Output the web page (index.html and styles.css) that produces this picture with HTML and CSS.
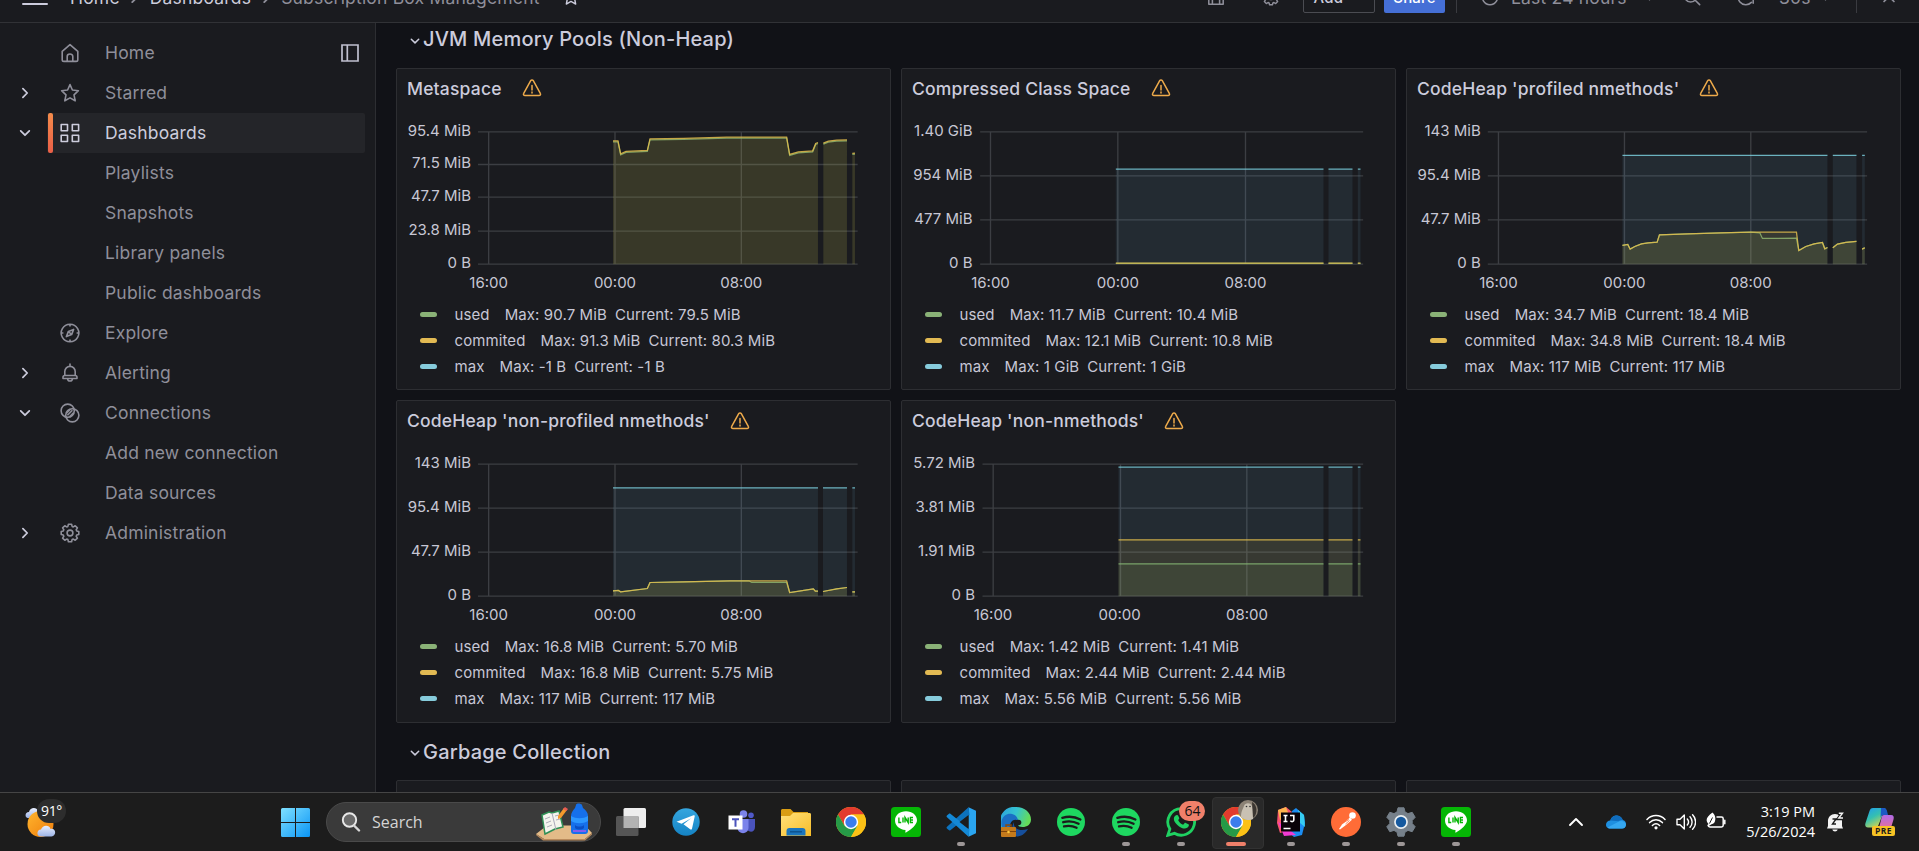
FILE: index.html
```html
<!DOCTYPE html>
<html lang="en">
<head>
<meta charset="utf-8">
<title>Subscription Box Management - Dashboards - Grafana</title>
<link rel="stylesheet" href="styles.css">
</head>
<body>
<svg class="defs" aria-hidden="true">
  <defs>
    <symbol id="i-down" viewBox="0 0 12 12"><path d="M2.3 4.2 6 7.9l3.7-3.7" fill="none" stroke="currentColor" stroke-width="1.5" stroke-linecap="round" stroke-linejoin="round"/></symbol>
    <symbol id="i-right" viewBox="0 0 12 12"><path d="M4.2 2.3 7.9 6 4.2 9.7" fill="none" stroke="currentColor" stroke-width="1.5" stroke-linecap="round" stroke-linejoin="round"/></symbol>
    <symbol id="i-star" viewBox="0 0 20 20"><path d="m10 1.6 2.4 5.4 6 .7-4.4 4.1 1.2 6L10 14.900l-5.200 2.900 1.200-6-4.400-4.100 6-.7z" fill="none" stroke="currentColor" stroke-width="1.6" stroke-linejoin="round"/></symbol>
    <symbol id="i-warn" viewBox="0 0 20 20"><path d="M8.700 2.700 1.700 15.400c-.6 1 0 2.200 1.300 2.200h14c1.300 0 1.900-1.200 1.300-2.200l-7-12.700c-.6-1-2-1-2.600 0zM10 7.600v4.300M10 14v.9" fill="none" stroke="currentColor" stroke-width="1.500" stroke-linecap="round"/></symbol>
    <symbol id="i-cog" viewBox="0 0 20 20"><path d="m8.400 1.300h3.200l.5 2.100 1.200.5 1.900-1.200 2.200 2.200-1.200 1.900.5 1.200 2.100.5v3l-2.100.5-.5 1.200 1.200 1.900-2.200 2.200-1.900-1.200-1.200.5-.5 2.100H8.400l-.5-2.100-1.200-.5-1.900 1.200-2.200-2.200 1.200-1.900-.5-1.200-2.100-.5v-3l2.100-.5.5-1.200-1.200-1.900 2.200-2.200 1.900 1.200 1.200-.5z" fill="none" stroke="currentColor" stroke-width="1.600" stroke-linejoin="round"/><circle cx="10" cy="10" r="2.900" fill="none" stroke="currentColor" stroke-width="1.600"/></symbol>
    <linearGradient id="g-win" x1="0" y1="0" x2="1" y2="1"><stop offset="0" stop-color="#7fe0ff"/><stop offset="1" stop-color="#0a95f5"/></linearGradient>
    <linearGradient id="g-tg" x1="0" y1="0" x2="0" y2="1"><stop offset="0" stop-color="#35a6df"/><stop offset="1" stop-color="#1583c4"/></linearGradient>
    <linearGradient id="g-folder" x1="0" y1="0" x2="1" y2="1"><stop offset="0" stop-color="#ffe07a"/><stop offset="1" stop-color="#f7bd28"/></linearGradient>
    <linearGradient id="g-edge" x1="0" y1="0" x2="1" y2="0.300"><stop offset="0" stop-color="#2b9fe0"/><stop offset=".55" stop-color="#35c4cf"/><stop offset="1" stop-color="#64dc5a"/></linearGradient>
    <linearGradient id="g-cop" x1="0" y1="0" x2=".6" y2="1"><stop offset="0" stop-color="#1f9cf0"/><stop offset=".5" stop-color="#35c0b0"/><stop offset="1" stop-color="#d9d74a"/></linearGradient>
    <linearGradient id="g-cop2" x1="0" y1="0" x2="0" y2="1"><stop offset="0" stop-color="#b06be8"/><stop offset="1" stop-color="#f0708c"/></linearGradient>
    <linearGradient id="g-cloud" x1="0" y1="0" x2="0" y2="1"><stop offset="0" stop-color="#e8efff"/><stop offset="1" stop-color="#9db4e6"/></linearGradient>
    <linearGradient id="g-sun" x1="0" y1="0" x2="1" y2="1"><stop offset="0" stop-color="#ffb52e"/><stop offset="1" stop-color="#ee7d0c"/></linearGradient>
    <symbol id="a-chrome" viewBox="0 0 30 30">
      <circle cx="15" cy="15" r="15" fill="#fbc116"/>
      <path d="M2 7.500A15 15 0 0 1 28 7.500H15L8.500 18.750z" fill="#e33b2e"/>
      <path d="M2 7.500 8.500 18.750 21.500 18.750 15 30A15 15 0 0 1 2 7.500z" fill="#269a47"/>
      <path d="M28 7.500A15 15 0 0 1 15 30l6.500-11.250L21 10l-6-2.500z" fill="#fbc116"/>
      <circle cx="15" cy="15" r="7.200" fill="#fff"/><circle cx="15" cy="15" r="5.700" fill="#3b7ded"/>
    </symbol>
    <symbol id="a-line" viewBox="0 0 30 30">
      <rect width="30" height="30" rx="3.500" fill="#05b605"/>
      <path d="M15 4.300c6.200 0 11 3.900 11 9 0 4.300-5.800 9.400-11 12.300-.9.400-.6-.6-.5-2.600C8.300 22.600 4 18.500 4 13.300c0-5.100 4.800-9 11-9z" fill="#fff"/>
      <path d="M7.900 10.500v5h2.300M12 10.500v5M14 15.500v-5l3.200 5v-5M22 10.500h-2.600v5H22M19.400 13H22" fill="none" stroke="#05b605" stroke-width="1.400"/>
    </symbol>
    <symbol id="a-spotify" viewBox="0 0 28 28"><circle cx="14" cy="14" r="14" fill="#1ed760"/><path d="M5.300 9.800c6-1.700 12.800-1.200 18.100 1.700M6.200 14.200c5-1.400 10.700-.9 15.400 1.600M7 18.400c4.200-1.100 8.600-.7 12.600 1.400" fill="none" stroke="#1c1c1c" stroke-width="2.300" stroke-linecap="round"/></symbol>
  </defs>
</svg>

<header class="topbar">
  <div class="topbar-row">
    <div class="burger"><i></i><i></i><i></i></div>
    <nav class="crumbs">
      <span>Home</span><svg class="sep"><use href="#i-right"/></svg><span>Dashboards</span><svg class="sep"><use href="#i-right"/></svg><span class="current">Subscription Box Management</span>
      <svg class="fav"><use href="#i-star"/></svg>
    </nav>
    <div class="tools">
      <svg class="t-save" viewBox="0 0 20 20"><path d="M2 2h11l5 5v11H2zM6 18v-6.500h8V18M6 2v4h6" fill="none" stroke="currentColor" stroke-width="1.700" stroke-linejoin="round"/></svg>
      <svg class="t-cog"><use href="#i-cog"/></svg>
      <span class="btn-add">Add<svg><use href="#i-down"/></svg></span>
      <span class="btn-share">Share</span>
      <i class="vline"></i>
      <svg class="t-clock" viewBox="0 0 20 20"><path d="M10 1.500a8.500 8.500 0 1 0 .01 0zM10 5v5" fill="none" stroke="currentColor" stroke-width="1.700"/></svg>
      <span class="range">Last 24 hours</span>
      <svg class="t-caret"><use href="#i-down"/></svg>
      <svg class="t-zoom" viewBox="0 0 20 20"><path d="M8.500 1.500a7 7 0 1 0 .01 0zM13.500 13.500l5 5M5.500 8.500h6" fill="none" stroke="currentColor" stroke-width="1.700" stroke-linecap="round"/></svg>
      <svg class="t-sync" viewBox="0 0 20 20"><path d="M17.500 6.500A8.500 8.500 0 1 0 16 16M18 17v-4.500h-4.500M17.800 2v4.500h-4.500" fill="none" stroke="currentColor" stroke-width="1.700" stroke-linecap="round"/></svg>
      <span class="every">30s</span>
      <svg class="t-caret2"><use href="#i-down"/></svg>
      <i class="vline v2"></i>
      <svg class="t-up" viewBox="0 0 20 20"><path d="m4.500 15 5.500-5.500 5.500 5.500" fill="none" stroke="currentColor" stroke-width="1.900" stroke-linecap="round"/></svg>
    </div>
  </div>
</header>

<div class="workspace">
  <aside class="sidebar">
    <div class="item"><span class="arrow"></span><svg class="ico" viewBox="0 0 20 20"><path d="M2.200 8.300 10 1.600l7.800 6.700v8.400c0 1-.7 1.700-1.700 1.700H3.900c-1 0-1.700-.7-1.700-1.700zM7.200 18v-4.600c0-3.300 5.600-3.300 5.600 0V18" fill="none" stroke="currentColor" stroke-width="1.600" stroke-linejoin="round"/></svg><span class="label">Home</span><svg class="dock" viewBox="0 0 18 18"><path d="M1 1h16v16H1zM6.300 1v16" fill="none" stroke="currentColor" stroke-width="1.700"/></svg></div>
    <div class="item"><svg class="arrow"><use href="#i-right"/></svg><svg class="ico"><use href="#i-star"/></svg><span class="label">Starred</span></div>
    <div class="item active"><svg class="arrow"><use href="#i-down"/></svg><svg class="ico" viewBox="0 0 20 20"><path d="M1.200 1.500h6.300v6.300H1.200zM12.300 1.500h6.300v6.300h-6.300zM1.200 12.200h6.300v6.300H1.200zM12.300 12.200h6.300v6.300h-6.300z" fill="none" stroke="currentColor" stroke-width="1.600" stroke-linejoin="round"/></svg><span class="label">Dashboards</span></div>
    <div class="item sub"><span class="label">Playlists</span></div>
    <div class="item sub"><span class="label">Snapshots</span></div>
    <div class="item sub"><span class="label">Library panels</span></div>
    <div class="item sub"><span class="label">Public dashboards</span></div>
    <div class="item"><span class="arrow"></span><svg class="ico" viewBox="0 0 20 20"><path d="M10 1.200a8.800 8.800 0 1 0 .01 0zM10 1.200v2.200M10 16.600v2.200M1.200 10h2.200M16.600 10h2.200M13.600 6.400l-2 5.200-5.200 2 2-5.200zM8.800 8.800l2.400 2.400" fill="none" stroke="currentColor" stroke-width="1.600" stroke-linejoin="round"/></svg><span class="label">Explore</span></div>
    <div class="item"><svg class="arrow"><use href="#i-right"/></svg><svg class="ico" viewBox="0 0 20 20"><path d="M10 1v2.300M4.800 12.500V8.600a5.200 5.200 0 0 1 10.400 0v3.900M3 15.500v-1.300c0-1 .7-1.700 1.800-1.700h10.400c1.100 0 1.800.7 1.800 1.700v1.300zM7.500 15.800c.6 3 4.400 3 5 0" fill="none" stroke="currentColor" stroke-width="1.600" stroke-linejoin="round" stroke-linecap="round"/></svg><span class="label">Alerting</span></div>
    <div class="item"><svg class="arrow"><use href="#i-down"/></svg><svg class="ico" viewBox="0 0 20 20"><g fill="none" stroke="currentColor" stroke-width="1.600"><circle cx="7.700" cy="7.700" r="6.600"/><circle cx="12.300" cy="12.300" r="6.600"/><path d="M6.200 10.400 10.400 6.200M7.400 12.200l5-5M9.600 13.800l4.200-4.200"/></g></svg><span class="label">Connections</span></div>
    <div class="item sub"><span class="label">Add new connection</span></div>
    <div class="item sub"><span class="label">Data sources</span></div>
    <div class="item"><svg class="arrow"><use href="#i-right"/></svg><svg class="ico"><use href="#i-cog"/></svg><span class="label">Administration</span></div>
  </aside>

  <main class="dash">
    <h2 class="row-title"><svg><use href="#i-down"/></svg>JVM Memory Pools (Non-Heap)</h2>
    <div class="panels" id="pools"></div>
    <h2 class="row-title"><svg><use href="#i-down"/></svg>Garbage Collection</h2>
    <div class="panels">
      <section class="panel"></section><section class="panel"></section><section class="panel"></section>
    </div>
  </main>
</div>

<footer class="taskbar">
  <div class="weather">
    <svg viewBox="0 0 42 46" width="42" height="46"><path d="M2.500 21c-3-1-2.500-6 1.500-6 1-5 8-5 9-1l3 7z" fill="url(#g-cloud)"/><circle cx="15.500" cy="27" r="13" fill="url(#g-sun)"/><path d="M16 39.500c-5 0-4.500-7 0-7 1.500-5 8.500-5 9.500-.5 5.500-1.500 6.500 7 1 7.500z" fill="url(#g-cloud)"/></svg>
    <span class="temp">91°</span>
  </div>
  <svg class="win" viewBox="0 0 29 29"><path d="M1.500 0H14v14H0V1.500A1.500 1.500 0 0 1 1.500 0zM15 0h12.500A1.500 1.500 0 0 1 29 1.500V14H15zM0 15h14v14H1.500A1.500 1.500 0 0 1 0 27.500zM15 15h14v12.500a1.500 1.500 0 0 1-1.500 1.500H15z" fill="url(#g-win)"/></svg>
  <div class="search">
    <svg class="lens" viewBox="0 0 20 20"><circle cx="8.500" cy="8" r="6.700" fill="#6a6a6a" stroke="#e8e8e8" stroke-width="1.900"/><path d="m13 13.500 5 5" stroke="#d8d8d8" stroke-width="2.400" stroke-linecap="round"/></svg>
    <span>Search</span>
    <svg class="art" viewBox="0 0 58 38"><path d="M1 31 12 22.500h38L57 30l-7 6H9z" fill="#e3bb88"/><path d="M1 31 9 36h41l7-6v1.500l-7 6H8L1 32z" fill="#b98a5b"/><path d="m7 12 7-3 3 1 7-2 4 16-8 2-2 1-8 4z" fill="#f4f4ee" stroke="#2f8f55" stroke-width="1.500"/><path d="m17 10 4 17" stroke="#aab" stroke-width="1"/><path d="m10 16 5-2M11 20l5-2M12 24l5-2M20 13l4-1M21 17l4-1" stroke="#99a" stroke-width=".8"/><path d="m23 13 6-8 3 2-6 8-3 1z" fill="#f59a2c"/><path d="m28 6 2-2 3 2-1.500 2z" fill="#e85b54"/><path d="M41 2c0-2 5-2 6 0l1 3c3 2 5 5 5 8v15c0 2-1 3-3 3H39c-2 0-3-1-3-3V13c0-3 2-6 4-8z" fill="#1670ea"/><path d="M36 13c5 3 12 3 17 0v5c-5 3-12 3-17 0z" fill="#2b97ff"/><path d="M40 22c2 2 7 2 9 0v3c-2 2-7 2-9 0z" fill="#0b4fc4"/><path d="M38 28h13" stroke="#8e5cf0" stroke-width="1.800"/></svg>
  </div>
  <div class="apps">
    <div class="app"><svg viewBox="0 0 30 30"><rect x="7.500" y="1" width="22.500" height="20" rx="1.500" fill="#eee"/><rect y="9" width="22.500" height="20" rx="1.500" fill="#555"/><path d="M7.500 9h15v12h-15z" fill="#b3b3b3"/></svg></div>
    <div class="app"><svg viewBox="0 0 30 30"><circle cx="15" cy="15" r="13.700" fill="url(#g-tg)"/><path d="M5.500 14.800 22.500 8.300c.8-.3 1.400.2 1.200 1.200L21 21.700c-.2.900-.8 1.100-1.500.7l-7-5.100 7.600-6.100-9.500 5.600z" fill="#fff"/></svg></div>
    <div class="app"><svg viewBox="0 0 30 30"><circle cx="17.500" cy="7" r="3.800" fill="#7b83eb"/><circle cx="25" cy="8.200" r="2.800" fill="#5059c9"/><path d="M21 12h8v8c0 5-5 6-7.500 3z" fill="#4a53bc"/><path d="M11.500 12h11v8.500c0 7.500-11 7.500-11 0z" fill="#7b83eb"/><rect x="2.500" y="8.500" width="14" height="14" fill="#fff"/><path d="M6 12.300h7M9.500 12v7.700" stroke="#4b53bc" stroke-width="2"/></svg></div>
    <div class="app"><svg viewBox="0 0 30 30"><path d="M0 3.500C0 2.500.8 2 1.600 2H9.500l3 3H27v6H0z" fill="#d99d13"/><path d="M0 9h9l3-3h16.500c1 0 1.500.7 1.500 1.500V29H0z" fill="url(#g-folder)"/><path d="M5.500 28.500V24c0-2 1-3 3-3h13c2 0 3 1 3 3v4.500z" fill="#1a75bd"/><path d="M9 24.800h12" stroke="#0b4e8a" stroke-width="1.300"/></svg></div>
    <div class="app"><svg><use href="#a-chrome"/></svg></div>
    <div class="app"><svg><use href="#a-line"/></svg></div>
    <div class="app run"><svg viewBox="0 0 30 30"><path d="m22.500.300 7.500 3.500v22.400l-7.500 3.500z" fill="#2aa5f0"/><path d="M22.500.300 1 19.700c-.6.500-.6 1.200-.1 1.700l1.800 1.700c.5.400 1.200.4 1.700.1L23.500 8z" fill="#0c72bd"/><path d="M22.500 29.700 1 10.300c-.6-.5-.6-1.200-.1-1.700l1.800-1.700c.5-.4 1.200-.4 1.700-.1L23.500 22z" fill="#1489d6"/><path d="m22.500 8-9 7 9 7z" fill="#1c1c1c"/></svg></div>
    <div class="app"><svg viewBox="0 0 30 30"><path d="M1 22A14.500 14.500 0 0 1 15 0c9 0 15 6 15 12.500 0 5-4 7.500-8.500 7.500-4 0-5-1.500-4-3 1-2-.5-5.500-4.500-5.500-5 0-8 4.500-8 10z" fill="url(#g-edge)"/><path d="M.5 14C2 8 7 6 11 7c4 1 6 4 6 7-3-3-9 0-8 7.500L2 23C.6 20 0 17 .5 14z" fill="#1b6fc4"/><path d="M13 15c-1 5 3 10 14 7-3 5-7 7.500-12 7.500-4-2-5-9-2-14.500z" fill="#164f9c"/><circle cx="17.500" cy="15.500" r="2.800" fill="#1c1c1c"/><rect y="20" width="15" height="10" rx="1" fill="#c47a1c"/><path d="M5 20v-2h5v2" fill="none" stroke="#8a4a0c" stroke-width="1.400"/><path d="M0 24.500h15" stroke="#7d430b"/><circle cx="7.500" cy="25" r="1.300" fill="#ffc83d"/></svg></div>
    <div class="app"><svg class="s28"><use href="#a-spotify"/></svg></div>
    <div class="app run"><svg class="s28"><use href="#a-spotify"/></svg></div>
    <div class="app run"><svg viewBox="0 0 30 30"><path d="M15.200 1.600A13.300 13.300 0 0 0 3.900 22L1.800 28.300l6.600-2A13.300 13.300 0 1 0 15.200 1.600z" fill="none" stroke="#1fd161" stroke-width="2.800"/><path d="M10.700 8c.6-.2 1.200 0 1.500.7l1 2.200c.2.500-.2 1.200-1.100 2.100 1 2.300 2.800 3.900 5 4.800l1.400-1.600c.3-.4.800-.4 1.300-.2l2.600 1.300c.6.300.6.900.4 1.500-1 2.800-4.200 3.200-7 2.100-3.700-1.400-6.800-4.700-7.700-7.300-.8-2.400.3-5 2.600-5.600z" fill="#1fd161"/></svg><b class="badge">64</b></div>
    <div class="app focus"><svg><use href="#a-chrome"/></svg><svg class="avatar" viewBox="0 0 20 20"><circle cx="10" cy="10" r="10" fill="#8c8275"/><path d="M3 17C3 11 5 9 6 6c1-3 6-4 8 0 1 3 3 7 1 13-4 2-9 1-12-2z" fill="#c9c1b3"/><path d="M14 2c4 2 6 8 3 14l-2 2z" fill="#3b3631"/><circle cx="8.500" cy="6.500" r=".8" fill="#333"/><circle cx="12" cy="6.500" r=".8" fill="#333"/></svg></div>
    <div class="app run"><svg viewBox="0 0 30 30"><path d="M2 3 10 0l6 5-2 18-10 3-3-10z" fill="#f8536d"/><path d="m2 3 8-3 3 8-9 5z" fill="#fdb44e"/><path d="m16 4 4-3 8 7 1 8-3 12-8 2-6-5z" fill="#1b8df2"/><path d="m2 15 6 14 12-1-10-8z" fill="#f23bd3"/><path d="m22 3 6 5 1 12-5-4z" fill="#37cdf2"/><rect x="5" y="5.500" width="19" height="19" fill="#0a0308"/><path d="M7.500 8.500h4M9.500 8.500v6M7.500 14.500h4M14 8.500h3.800v4.600c0 1.800-2.300 1.900-3.500.7M7.500 21.500h7" fill="none" stroke="#fff" stroke-width="1.600"/></svg></div>
    <div class="app run"><svg viewBox="0 0 30 30"><circle cx="15" cy="15" r="15" fill="#ff6c37"/><circle cx="21.500" cy="8.500" r="3.300" fill="#fff"/><path d="m19 10.500 2 2.200-6 5.300-6 4.500-1-.5 3-4.500z" fill="#fff"/><path d="m12 16 6-3.500M14.500 17l4-3.500" stroke="#ff6c37" stroke-width=".8"/></svg></div>
    <div class="app run"><svg viewBox="0 0 30 30"><path d="M12 .8h6l1 4.200 3 1.600 4.200-1.300 3 5-3 3.200v3l3 3.200-3 5-4.200-1.300-3 1.700-1 4.100h-6l-1-4.100-3-1.700-4.200 1.300-3-5 3-3.200v-3l-3-3.200 3-5L8 6.600 11 5z" fill="#76808a" stroke="#76808a" stroke-linejoin="round"/><circle cx="15" cy="15" r="6.900" fill="#e9eef2"/><circle cx="15" cy="15" r="5.200" fill="#15599f"/></svg></div>
    <div class="app run"><svg><use href="#a-line"/></svg></div>
  </div>
  <div class="tray">
    <svg class="chev" viewBox="0 0 16 16"><path d="m2 11 6-6 6 6" fill="none" stroke="#fff" stroke-width="1.900" stroke-linecap="round" stroke-linejoin="round"/></svg>
    <svg class="drive" viewBox="0 0 20 14"><path d="M4.500 13.500C1 13.500 0 11.500 0 9.700 0 7 2 5.500 4.300 5.400 5.500 1.500 9 .3 11 .5c3 .2 5 2 5.700 4.500 2.300.3 3.300 2 3.300 4.200 0 2.700-1.600 4.300-4 4.300z" fill="#1e8fe0"/><path d="M4.300 5.400C5.500 1.500 9 .3 11 .5c3 .2 5 2 5.700 4.500-2-.2-3.200.5-4 1.200z" fill="#0f6cbd"/><path d="M1.500 12.500 12 7c3-2 7-.5 8 2.200 0 2.700-1.600 4.300-4 4.300H4.500c-1.500 0-2.300-.4-3-1z" fill="#35a7f0"/></svg>
    <svg class="wifi" viewBox="0 0 20 16"><g fill="none" stroke="#fff" stroke-width="1.500" stroke-linecap="round"><path d="M1 5.500c5-5.300 13-5.300 18 0M3.600 8.600c3.700-3.800 9.100-3.800 12.800 0M6.400 11.500c2.200-2.100 5-2.100 7.200 0"/></g><circle cx="10" cy="13.800" r="1.600" fill="#fff"/></svg>
    <svg class="vol" viewBox="0 0 20 18"><path d="M1 6.300h3L8.300 2v14L4 11.700H1zM11.300 6c1.500 1.800 1.500 4.200 0 6M14 3.800c2.800 3 2.800 7.400 0 10.400M16.600 1.700c4 4.300 4 10.300 0 14.600" fill="none" stroke="#fff" stroke-width="1.400" stroke-linecap="round" stroke-linejoin="round"/></svg>
    <svg class="batt" viewBox="0 0 20 18"><path d="M11 5h4.500c1 0 1.700.7 1.700 1.700v6.600c0 1-.7 1.700-1.700 1.700H4c-1 0-1.700-.7-1.700-1.500M18.800 8.300v3.400" fill="none" stroke="#fff" stroke-width="1.500" stroke-linecap="round"/><path d="M6.500.500C9 3 9.500 5 9.300 7.500c-.2 3-1.800 4.500-3.800 4.800L2 14.500 1.500 13l1-1C-1 8 .5 5 6.500.500z" fill="#fff"/><path d="m3.500 11.500 3-6" stroke="#1c1c1c"/></svg>
    <div class="clock"><span>3:19 PM</span><span>5/26/2024</span></div>
    <svg class="bell" viewBox="0 0 18 20"><path d="M9 2c4 0 7 3 7 7v5l1 2.500H1L2 14V9c0-4 3-7 7-7z" fill="#f4f4f4"/><path d="M6.300 17.500c.6 2.500 4.800 2.500 5.400 0z" fill="#f4f4f4"/><path d="M6.500 7H10l-3.500 5H10" fill="none" stroke="#1c1c1c" stroke-width="1.400"/><path d="M12 1.200h4.200L12.500 6.500H17" fill="none" stroke="#1c1c1c" stroke-width="3.500"/><path d="M12.800 1.200h3.700L12.800 6H17" fill="none" stroke="#f4f4f4" stroke-width="1.400"/></svg>
    <div class="copilot"><svg viewBox="0 0 30 30"><path d="M8 1h10c2 0 3 1 3.500 3l-4 4-4 10c-.6 1.500-1.500 2.500-3.500 2.500H3c-2.500 0-3.300-2-2.500-4.500L4.500 4C5.200 2 6 1 8 1z" fill="url(#g-cop)"/><path d="M16 1h3c2 0 2.500 1.500 3 3l1 4h-4c-2 0-3 1-3.500 3z" fill="#1b59c4"/><path d="M19 8h7c2.500 0 3.300 2 2.500 4.500L25 24H10c2.500 0 3.500-1 4-3l2.500-10c.5-2 1-3 2.500-3z" fill="url(#g-cop2)"/></svg><span>PRE</span></div>
  </div>
</footer>
<script src="charts.js"></script>
</body>
</html>
```
FILE: styles.css
```css
* { box-sizing: border-box; }
html, body { margin: 0; height: 100%; }
body {
  width: 1919px; height: 851px; overflow: hidden;
  display: flex; flex-direction: column;
  background: #111217; color: #ccccdc;
  font-family: Inter, "Liberation Sans", sans-serif;
  font-size: 17.5px; letter-spacing: 0.01071em;
}
.defs { position: absolute; width: 0; height: 0; }
svg { display: block; flex: none; }

/* top bar, scrolled partly out of the window */
.topbar { height: 23px; flex: none; overflow: hidden; background: #1a1b1f; border-bottom: 1px solid #313236; }
.topbar-row { height: 50px; margin-top: -28px; display: flex; align-items: center; padding-left: 22px; color: #8f8f9a; }
.burger { width: 26px; display: flex; flex-direction: column; gap: 5px; }
.burger i { height: 2px; background: #ccccdc; border-radius: 1px; }
.crumbs { display: flex; align-items: center; margin-left: 22px; white-space: nowrap; color: #ccccdc; }
.crumbs .sep { width: 15px; height: 15px; margin: 0 7.500px; color: #8f8f9a; }
.crumbs .current { color: #8f8f9a; }
.crumbs .fav { width: 18px; height: 18px; margin-left: 22px; }
.tools { margin-left: auto; display: flex; align-items: center; padding-right: 20px; white-space: nowrap; }
.t-save, .t-cog, .t-clock, .t-zoom, .t-sync, .t-up { width: 18px; height: 18px; }
.t-cog { margin-left: 37px; }
.btn-add { height: 31px; width: 72px; margin-left: 23px; border: 1px solid #4b4c52; border-radius: 2px; display: flex; align-items: center; padding-left: 10px; gap: 8px; font-size: 15px; font-weight: 500; color: #ccccdc; }
.btn-add svg { width: 12px; height: 12px; color: #8f8f9a; }
.btn-share { height: 31px; width: 61px; margin-left: 9.500px; background: #456fd6; border-radius: 2px; color: #fff; font-size: 15px; font-weight: 500; display: flex; align-items: center; justify-content: center; }
.vline { width: 1px; height: 31px; background: #3a3b40; margin-left: 11px; }
.t-clock { margin-left: 24px; }
.range { margin-left: 12px; width: 117px; }
.t-caret { width: 13px; height: 13px; margin-left: 15px; }
.t-zoom { margin-left: 26.500px; }
.t-sync { margin-left: 36.500px; }
.every { margin-left: 24px; width: 31px; }
.t-caret2 { width: 13px; height: 13px; margin-left: 9px; }
.v2 { margin-left: 24px; }
.t-up { margin-left: 22px; width: 20px; }

.workspace { flex: none; height: 769px; display: flex; overflow: hidden; }

.sidebar { width: 376px; flex: none; background: #1a1b1f; border-right: 1px solid #2d2e32; padding-top: 9.500px; color: #8f8f9a; }
.item { height: 40px; display: flex; align-items: center; position: relative; padding-left: 18px; }
.item > * { position: relative; }
.arrow { width: 14px; height: 14px; color: #ccccdc; }
.ico { width: 20px; height: 20px; margin-left: 28px; }
.label { margin-left: 25px; padding-bottom: 1px; }
.sub .label { margin-left: 87px; }
.dock { width: 18px; height: 18px; margin-left: auto; margin-right: 16px; color: #c0c0cf; }
.active { color: #ccccdc; }
.active::before { content: ""; position: absolute; left: 47px; right: 10px; top: 0; bottom: 0; background: #242529; border-radius: 2px; }
.active::after { content: ""; position: absolute; left: 48px; width: 5px; top: 0; bottom: 0; border-radius: 2px; background: linear-gradient(#f58c4b, #ea5f47); }

.dash { flex: 1; padding: 0 19.500px 0 20px; margin-top: -2.600px; }
.row-title { height: 37.500px; margin: 0 0 10px; padding-left: 13px; display: flex; align-items: center; gap: 2px; font-size: 20px; font-weight: 500; letter-spacing: .01em; }
.row-title svg { width: 12px; height: 12px; margin-top: 3px; }
.panels { display: grid; grid-template-columns: repeat(3, 1fr); gap: 10px; margin-bottom: 10px; }
.panel { height: 322.500px; background: #1a1b1f; border: 1px solid #2d2e32; border-radius: 2px; }
.panel-head { height: 40px; display: flex; align-items: center; padding: 0 0 1.500px 10px; font-weight: 500; white-space: nowrap; }
.panel-head svg { width: 20px; height: 20px; margin-left: 20px; color: #eeab4b; }
.chart { width: 493px; height: 185px; overflow: hidden; }
.chart text { fill: #c7c7d4; font-size: 15px; letter-spacing: 0; }
.legend { list-style: none; margin: 0; padding: 7.500px 0 0 23px; font-size: 15px; color: #c7c7d6; letter-spacing: .007em; }
.legend li { height: 26px; display: flex; align-items: center; white-space: nowrap; }
.swatch { width: 17px; height: 5px; border-radius: 3px; margin-right: 17.500px; }
.legend .max { margin-left: 15px; }
.legend .cur { margin-left: 8px; }

/* operating system taskbar */
.taskbar { height: 59px; flex: none; position: relative; display: flex; background: #1c1c1c; border-top: 1px solid #454545; font-family: "Open Sans", "Noto Sans", sans-serif; letter-spacing: 0; color: #fff; }
.weather { position: relative; width: 42px; margin: 4px 0 0 25px; }
.temp { position: absolute; left: 12px; top: 2px; width: 29px; height: 24px; border-radius: 12px; background: #2d2d2d; font-size: 14px; line-height: 24px; text-align: center; letter-spacing: -.3px; }
.win { width: 29px; height: 29px; margin: 15px 0 0 214px; }
.search { width: 275px; height: 40px; margin: 9px 0 0 16px; border-radius: 20px; background: #3a3a3a; border: 1px solid #4a4a4a; display: flex; align-items: center; color: #d4d4d4; font-size: 16px; }
.search .lens { width: 20px; height: 20px; margin-left: 13.500px; margin-right: 11.500px; }
.search .art { width: 58px; height: 38px; margin-left: auto; margin-right: 7px; }
.apps { display: flex; margin-left: 2px; }
.app { width: 55.060px; height: 58px; position: relative; display: flex; justify-content: center; padding-top: 14px; }
.app > svg { width: 30px; height: 30px; position: relative; }
.app > .s28 { width: 28px; height: 28px; margin-top: 1px; }
.app.run::after, .app.focus::after { content: ""; position: absolute; left: 50%; margin-left: -4px; top: 49px; width: 8px; height: 4px; border-radius: 2px; background: #9d9797; }
.app.focus::before { content: ""; position: absolute; left: 3px; top: 4px; width: 50px; height: 50px; border-radius: 4px; background: #292929; border: 1px solid #323232; }
.app.focus::after { width: 20px; margin-left: -10px; background: #f0806a; }
.badge { position: absolute; left: 26px; top: 8px; width: 26px; height: 20px; border-radius: 10px; background: #f0806a; color: #111; font-size: 14px; font-weight: 400; line-height: 20px; text-align: center; }
.app > .avatar { position: absolute; left: 29px; top: 7px; width: 20px; height: 20px; }
.tray { margin-left: auto; display: flex; align-items: center; height: 58px; padding-right: 24px; }
.chev { width: 16px; height: 16px; margin-right: 22px; }
.drive { width: 20px; height: 14px; margin-right: 20px; }
.wifi { width: 20px; height: 16px; margin-right: 10px; }
.vol { width: 20px; height: 18px; margin-right: 10px; }
.batt { width: 20px; height: 18px; margin-right: 20px; margin-top: -2px; }
.clock { width: 69px; display: flex; flex-direction: column; text-align: right; font-size: 14.500px; line-height: 20px; margin-right: 11px; white-space: nowrap; }
.bell { width: 18px; height: 20px; margin-right: 21px; }
.copilot { position: relative; width: 30px; height: 30px; }
.copilot span { position: absolute; left: 7px; top: 19px; width: 23px; height: 10px; border-radius: 2px; background: #f7c325; color: #1c1c1c; font-size: 8.500px; font-weight: 700; line-height: 10px; text-align: center; letter-spacing: .4px; }
```
FILE: charts.js
```js
// Plot geometry is kept in thirds of a pixel; labels are in pixels.
const BLUE = '#79cbd9', YELLOW = '#e2bd4c', GREEN = '#84b473';
const FILL = { [BLUE]: '#78b8e4', [YELLOW]: '#eab839', [GREEN]: '#7eb26d' };
const SWATCH = { used: '#8ab277', commited: '#e2ba53', max: '#86cbdb' };

const flat = (y, spans) => spans.map(([a, b]) => [[a, y], [b, y]]);

const spansA = [[669, 1284], [1299, 1371], [1387, 1395]];
const spansB = [[661, 1284], [1299, 1371], [1387, 1395]];
const spansC = [[665, 1280], [1296, 1367], [1384, 1392]];

const meta = [
  [[669, 243], [684, 243], [692, 282], [708, 275], [772, 272], [780, 237], [880, 236], [1010, 232], [1190, 232], [1199, 284], [1225, 276], [1268, 273], [1277, 251], [1284, 248]],
  [[1300, 250], [1315, 244], [1340, 241], [1371, 240]],
  [[1387, 281], [1395, 280]]
];
const profiledTop = [[665, 557], [681, 554], [688, 568], [702, 560], [722, 552], [742, 549], [769, 547], [776, 525], [860, 522], [960, 519], [1050, 517]];
const profiledEnd = [[1194, 572], [1215, 560], [1240, 552], [1265, 548], [1272, 567], [1280, 563]];
const profiledRest = [[[1296, 564], [1310, 553], [1335, 548], [1367, 545]], [[1384, 568], [1392, 564]]];
const profiled = [[...profiledTop, [1187, 517], ...profiledEnd], ...profiledRest];
const profiledUsed = [[...profiledTop, [1077, 519], [1085, 536], [1187, 535], ...profiledEnd], ...profiledRest];
const npTop = [[669, 589], [685, 588], [692, 592], [772, 582], [780, 564], [880, 562], [1020, 559]];
const npEnd = [[1199, 594], [1270, 583], [1276, 590], [1284, 590]];
const npRest = [[[1299, 591], [1340, 583], [1371, 579]], [[1387, 592], [1395, 592]]];
const nonProfiled = [[...npTop, [1190, 559], ...npEnd], ...npRest];
const nonProfiledUsed = [[...npTop, [1077, 559], [1085, 564], [1190, 564], ...npEnd], ...npRest];

const panels = [
  {
    title: 'Metaspace', view: [7, 49.2], x: [264, 1403], v: [296, 675, 1054], labelX: 81,
    h: [216, 314, 412, 514, 613], ticks: ['95.4 MiB', '71.5 MiB', '47.7 MiB', '23.8 MiB', '0 B'],
    series: [[GREEN, meta, 3], [YELLOW, meta]],
    legend: [['used', '90.7 MiB', '79.5 MiB'], ['commited', '91.3 MiB', '80.3 MiB'], ['max', '-1 B', '-1 B']]
  },
  {
    title: 'Compressed Class Space', view: [6.5, 49.2], x: [254, 1403], v: [285, 667, 1050], labelX: 77,
    h: [216, 348, 480, 613], ticks: ['1.40 GiB', '954 MiB', '477 MiB', '0 B'],
    series: [[BLUE, flat(328, spansB)], [GREEN, flat(611, spansB)], [YELLOW, flat(610, spansB)]],
    legend: [['used', '11.7 MiB', '10.4 MiB'], ['commited', '12.1 MiB', '10.8 MiB'], ['max', '1 GiB', '1 GiB']]
  },
  {
    title: "CodeHeap 'profiled nmethods'", view: [6.2, 49.2], x: [261, 1399], v: [293, 671, 1050], labelX: 80,
    h: [216, 348, 480, 613], ticks: ['143 MiB', '95.4 MiB', '47.7 MiB', '0 B'],
    series: [[BLUE, flat(287, spansC)], [GREEN, profiledUsed], [YELLOW, profiled]],
    legend: [['used', '34.7 MiB', '18.4 MiB'], ['commited', '34.8 MiB', '18.4 MiB'], ['max', '117 MiB', '117 MiB']]
  },
  {
    title: "CodeHeap 'non-profiled nmethods'", view: [7, 46.5], x: [264, 1403], v: [296, 675, 1054], labelX: 81,
    h: [209, 341, 473, 605], ticks: ['143 MiB', '95.4 MiB', '47.7 MiB', '0 B'],
    series: [[BLUE, flat(280, spansA)], [GREEN, nonProfiledUsed], [YELLOW, nonProfiled]],
    legend: [['used', '16.8 MiB', '5.70 MiB'], ['commited', '16.8 MiB', '5.75 MiB'], ['max', '117 MiB', '117 MiB']]
  },
  {
    title: "CodeHeap 'non-nmethods'", view: [6.5, 46.5], x: [261, 1403], v: [293, 675, 1054], xLabels: [97.5, 224.2, 351.5], labelX: 79.5,
    h: [209, 341, 473, 605], ticks: ['5.72 MiB', '3.81 MiB', '1.91 MiB', '0 B'],
    series: [[BLUE, flat(218, spansA)], [YELLOW, flat(436, spansA)], [GREEN, flat(508, spansA)]],
    legend: [['used', '1.42 MiB', '1.41 MiB'], ['commited', '2.44 MiB', '2.44 MiB'], ['max', '5.56 MiB', '5.56 MiB']]
  }
];

function chart(p) {
  const base = p.h[p.h.length - 1];
  const grid = p.h.map(y => `M${p.x[0]} ${y}H${p.x[1]}`).join('') + p.v.map(x => `M${x} ${p.h[0] - 2}V${base + 2}`).join('');
  const shapes = p.series.map(([color, segs, dy = 0]) => {
    const lines = segs.map(s => 'M' + s.map(([x, y]) => `${x} ${y + dy}`).join('L'));
    const areas = segs.map((s, i) => `${lines[i]}L${s[s.length - 1][0]} ${base}L${s[0][0]} ${base}Z`);
    return `<path d="${areas.join('')}" fill="${FILL[color]}" fill-opacity=".1"/><path d="${lines.join('')}" fill="none" stroke="${color}" stroke-opacity=".85" stroke-width="3.75"/>`;
  }).join('');
  const yText = p.ticks.map((t, i) => `<text x="${p.labelX}" y="${p.h[i] / 3 + 4}" text-anchor="end">${t}</text>`).join('');
  const centers = p.xLabels || p.v.map(x => x / 3);
  const xText = ['16:00', '00:00', '08:00'].map((t, i) => `<text x="${centers[i]}" y="${base / 3 + 23.7}" text-anchor="middle">${t}</text>`).join('');
  return `<svg class="chart" viewBox="${p.view[0]} ${p.view[1]} 493 185"><g transform="scale(.33333)"><path d="${grid}" stroke="#f0faff" stroke-opacity=".16" stroke-width="4" fill="none"/>${shapes}</g>${yText}${xText}</svg>`;
}

document.getElementById('pools').innerHTML = panels.map(p => `
  <section class="panel">
    <div class="panel-head"><span>${p.title}</span><svg><use href="#i-warn"/></svg></div>
    ${chart(p)}
    <ul class="legend">${p.legend.map(([name, max, cur]) => `<li><i class="swatch" style="background:${SWATCH[name]}"></i><span>${name}</span><span class="max">Max: ${max}</span><span class="cur">Current: ${cur}</span></li>`).join('')}</ul>
  </section>`).join('');
```
